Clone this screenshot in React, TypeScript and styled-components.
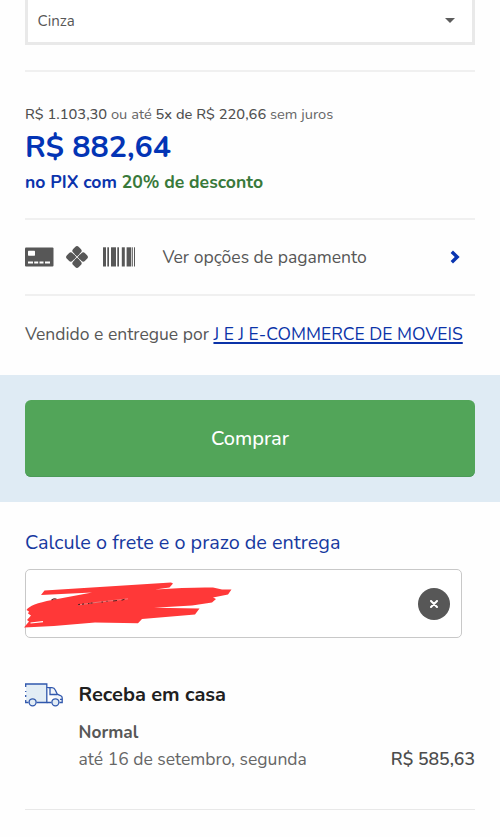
import React from "react";
import styled, { createGlobalStyle } from "styled-components";

const GlobalStyle = createGlobalStyle`
  *, *::before, *::after { box-sizing: border-box; }
  body {
    margin: 0;
    background: #fefefe;
    color: #575757;
    font-family: "Nunito", "Lato", "Open Sans", sans-serif;
    font-size: 17.5px;
  }
`;

const Page = styled.main`
  width: 500px;
  height: 837px;
  overflow: hidden;
  display: flex;
  flex-direction: column;
`;

const Divider = styled.hr<{ $gap: number; $thin?: boolean }>`
  flex: none;
  width: 450px;
  height: ${(p) => (p.$thin ? 1 : 2)}px;
  margin: ${(p) => p.$gap}px 25px 0;
  border: 0;
  background: ${(p) => (p.$thin ? "#e8e8e8" : "#f0f0f0")};
`;

const ColorSelect = styled.div`
  flex: none;
  display: flex;
  align-items: center;
  justify-content: space-between;
  height: 45px;
  margin: 0 25px;
  padding: 0 17px 1px 9.5px;
  border: 3px solid #e9e9e9;
  border-top: 0;
  background: #fff;
  font-size: 15.1px;
`;

const Caret = styled.svg`
  display: block;
  width: 10px;
  height: 5px;
`;

const Pricing = styled.section`
  padding: 33px 25px 0;
`;

const Installments = styled.p`
  margin: 0;
  font-size: 14.68px;
  line-height: 19px;
  white-space: nowrap;
  color: #666;
`;

const Strong = styled.span`
  font-weight: 500;
  color: #505050;
`;

const Price = styled.p`
  margin: 0;
  font-size: 30.4px;
  font-weight: 700;
  line-height: 46px;
  color: #0334b5;
`;

const PixNote = styled.p`
  margin: 0;
  font-size: 17.6px;
  font-weight: 700;
  line-height: 24px;
  color: #0b33ac;
`;

const Discount = styled.span`
  color: #39793a;
`;

const PaymentRow = styled.div`
  flex: none;
  display: flex;
  align-items: center;
  height: 74px;
  padding: 0 40px 0 25px;
`;

const PaymentIcons = styled.div`
  display: flex;
  align-items: center;
  width: 137.5px;
`;

const Icon = styled.svg<{ $gap?: number }>`
  display: block;
  flex: none;
  margin-left: ${(p) => p.$gap ?? 0}px;
`;

const PaymentLabel = styled.span`
  flex: 1;
  font-size: 17.55px;
`;

const Seller = styled.p`
  flex: none;
  height: 79px;
  margin: 0;
  padding: 0 25px;
  line-height: 77px;
  font-size: 17.53px;
  white-space: nowrap;
`;

const SellerLink = styled.a`
  color: #0b33a8;
  text-decoration: underline;
  text-decoration-thickness: 1.5px;
  text-underline-offset: 1.5px;
`;

const BuyBand = styled.div`
  flex: none;
  display: flex;
  height: 127px;
  padding: 24.5px 25px 25px;
  background: #dfebf4;
`;

const BuyButton = styled.button`
  flex: 1;
  padding: 0;
  border: 0;
  border-radius: 6px;
  background: #52a559;
  box-shadow: inset 0 -1px #4b9a58;
  color: #fff;
  font: inherit;
  font-size: 20px;
  font-weight: 500;
`;

const Shipping = styled.section`
  padding: 20.5px 25px 0;
`;

const ShippingTitle = styled.h2`
  margin: 0;
  font-size: 19.83px;
  font-weight: 400;
  line-height: 40px;
  color: #1739a0;
`;

const ZipField = styled.div`
  position: relative;
  display: flex;
  align-items: center;
  justify-content: flex-end;
  width: 437px;
  height: 69px;
  margin-top: 6.5px;
  padding: 0 11px;
  border: 1.5px solid #c8c8c8;
  border-radius: 5px;
  background: #fff;
`;

const Scribble = styled.svg`
  position: absolute;
  left: -2px;
  top: 12px;
  width: 210px;
  height: 48px;
`;

const ClearButton = styled.button`
  display: grid;
  place-items: center;
  width: 32px;
  height: 32px;
  padding: 1px 0 0;
  border: 0;
  border-radius: 50%;
  background: #575757;
`;

const Delivery = styled.section`
  display: grid;
  grid-template-columns: 53.5px 1fr auto;
  grid-template-rows: 30px 26px 26px;
  align-items: center;
  margin: 42px 25px 0;
`;

const DeliveryTitle = styled.h3`
  grid-column: 2 / 4;
  margin: 0;
  font-size: 20px;
  font-weight: 700;
  line-height: 30px;
  color: #202020;
`;

const Method = styled.span`
  grid-column: 2 / 4;
  align-self: end;
  margin-bottom: -10px;
  line-height: 26px;
  font-size: 17.3px;
  font-weight: 700;
`;

const DeliveryDate = styled.span`
  grid-column: 2;
  margin-top: 20px;
  line-height: 26px;
  font-size: 17.53px;
  color: #666;
`;

const DeliveryPrice = styled.span`
  margin-top: 20px;
  line-height: 26px;
  font-size: 17.65px;
  font-weight: 600;
  color: #4c4c4c;
`;

const CardIcon = () => (
  <Icon width="29" height="20" viewBox="0 0 29 20">
    <rect y=".5" width="28.5" height="19" rx="1" fill="#575757" />
    <rect x="3" y="3.7" width="7" height="5" rx=".6" fill="#fff" />
    <path d="M3 15.5h5M9.2 15.5h4M14.5 15.5h4M20 15.5h5" stroke="#fff" strokeWidth="2" />
  </Icon>
);

const PixIcon = () => (
  <Icon $gap={12} width="22" height="22" viewBox="0 0 22 22">
    <g transform="translate(11 11) rotate(45)" fill="#575757">
      <rect x="-8.4" y="-8.4" width="8" height="8" rx="2.6" />
      <rect x=".4" y="-8.4" width="8" height="8" rx="2.6" />
      <rect x="-8.4" y=".4" width="8" height="8" rx="2.6" />
      <rect x=".4" y=".4" width="8" height="8" rx="2.6" />
      <path d="M-4-4H-.4V-.4H-4ZM.4-4H4V-.4H.4ZM-4 .4H-.4V4H-4ZM.4 .4H4V4H.4Z" />
    </g>
  </Icon>
);

const bars: [number, number][] = [
  [0, 3], [4.3, 1.7], [8, 5], [14.3, 1.7], [18.8, 3], [23.6, 4.7], [29.2, 0.8], [31, 1],
];

const BarcodeIcon = () => (
  <Icon $gap={14.5} width="33" height="20" viewBox="0 0 33 20">
    {bars.map(([x, w]) => (
      <rect key={x} x={x} y=".3" width={w} height="19.2" fill="#575757" />
    ))}
  </Icon>
);

const ChevronIcon = () => (
  <Icon width="10" height="14" viewBox="0 0 10 14">
    <path d="M1.8 1.7 7.2 7 1.8 12.3" fill="none" stroke="#0a35b0" strokeWidth="3.4" />
  </Icon>
);

const TruckIcon = () => (
  <Icon width="38" height="24" viewBox="0 0 38 24" fill="none" stroke="#3158ad" strokeWidth="1.3">
    <path d="M1 1H21.8V19H1Z" fill="#e3edf5" stroke="none" />
    <path d="M0 1H21.8V19.5H11.5M3.5 19.5H.7V17M.7 1.5V4M.7 8v1M.7 12v2" />
    <path d="M21.8 4.7H27Q29.3 4.7 30.3 7L32.3 11.2 36.2 13Q37.2 13.6 37.2 15V19.5H34.5M21.8 19.5H26.5" fill="#f1f5fa" />
    <path d="M25 5V11.5H32.3M35 16.3H37.2" />
    <circle cx="7.6" cy="19.3" r="3.5" fill="#e3edf5" />
    <circle cx="30.4" cy="19.3" r="3.5" fill="#e3edf5" />
  </Icon>
);

export default function App() {
  return (
    <>
      <GlobalStyle />
      <Page>
        <ColorSelect>
          Cinza
          <Caret viewBox="0 0 10 5">
            <path d="M0 0H10L5 5Z" fill="#5c5c5c" />
          </Caret>
        </ColorSelect>
        <Divider $gap={25} />
        <Pricing>
          <Installments>
            <Strong>R$ 1.103,30</Strong> ou até <Strong>5x de R$ 220,66</Strong> sem juros
          </Installments>
          <Price>R$ 882,64</Price>
          <PixNote>
            no PIX com <Discount>20% de desconto</Discount>
          </PixNote>
        </Pricing>
        <Divider $gap={24} />
        <PaymentRow>
          <PaymentIcons>
            <CardIcon />
            <PixIcon />
            <BarcodeIcon />
          </PaymentIcons>
          <PaymentLabel>Ver opções de pagamento</PaymentLabel>
          <ChevronIcon />
        </PaymentRow>
        <Divider $gap={0} />
        <Seller>
          Vendido e entregue por <SellerLink>J E J E-COMMERCE DE MOVEIS</SellerLink>
        </Seller>
        <BuyBand>
          <BuyButton>Comprar</BuyButton>
        </BuyBand>
        <Shipping>
          <ShippingTitle>Calcule o frete e o prazo de entrega</ShippingTitle>
          <ZipField>
            <Scribble viewBox="24 582 210 48">
              <path
                fill="#ff3838"
                d="M44.5 590.5 171 582.5 173 583.5 169.5 587.5 155 589.5Q190 587 213 587.5L222 589.5H231.5L228 594.5 213 597.5 216 599 212 602.5 192 605.5 154 607.8 199.5 608.5 195 614.5 142 619 138 623.3 95 622.5Q60 626 24 627.5L29 621.5 27 620 31 615.5 28 613.5 29 611.5 26.5 610Q30 604 52 600L92 592.5 41 595Z"
              />
              <path d="M30.5 623 43 621.6" stroke="#fff" strokeWidth="1.2" />
              <path d="M78 605 94 602.7 128 598.8" stroke="#ff9b9b" strokeWidth=".7" />
              <path
                d="M51.5 600 54 598.8 56.5 599M78 604.7 80 604.4M82 604.2 84 603.9M88 603.7 89.5 603.2M90.5 603.3 92.5 602.8M101.5 602.3 103 602M107 601.8V600.8M113 601 117 600.5M121.5 600.2 124.5 599.2"
                fill="none"
                stroke="#5b2020"
                strokeWidth="1.1"
              />
            </Scribble>
            <ClearButton aria-label="Limpar">
              <svg width="8" height="8" viewBox="0 0 8 8">
                <path d="M1 1 7 7M7 1 1 7" stroke="#fff" strokeWidth="2" strokeLinecap="round" />
              </svg>
            </ClearButton>
          </ZipField>
        </Shipping>
        <Delivery>
          <TruckIcon />
          <DeliveryTitle>Receba em casa</DeliveryTitle>
          <Method>Normal</Method>
          <DeliveryDate>até 16 de setembro, segunda</DeliveryDate>
          <DeliveryPrice>R$ 585,63</DeliveryPrice>
        </Delivery>
        <Divider $gap={47} $thin />
      </Page>
    </>
  );
}
